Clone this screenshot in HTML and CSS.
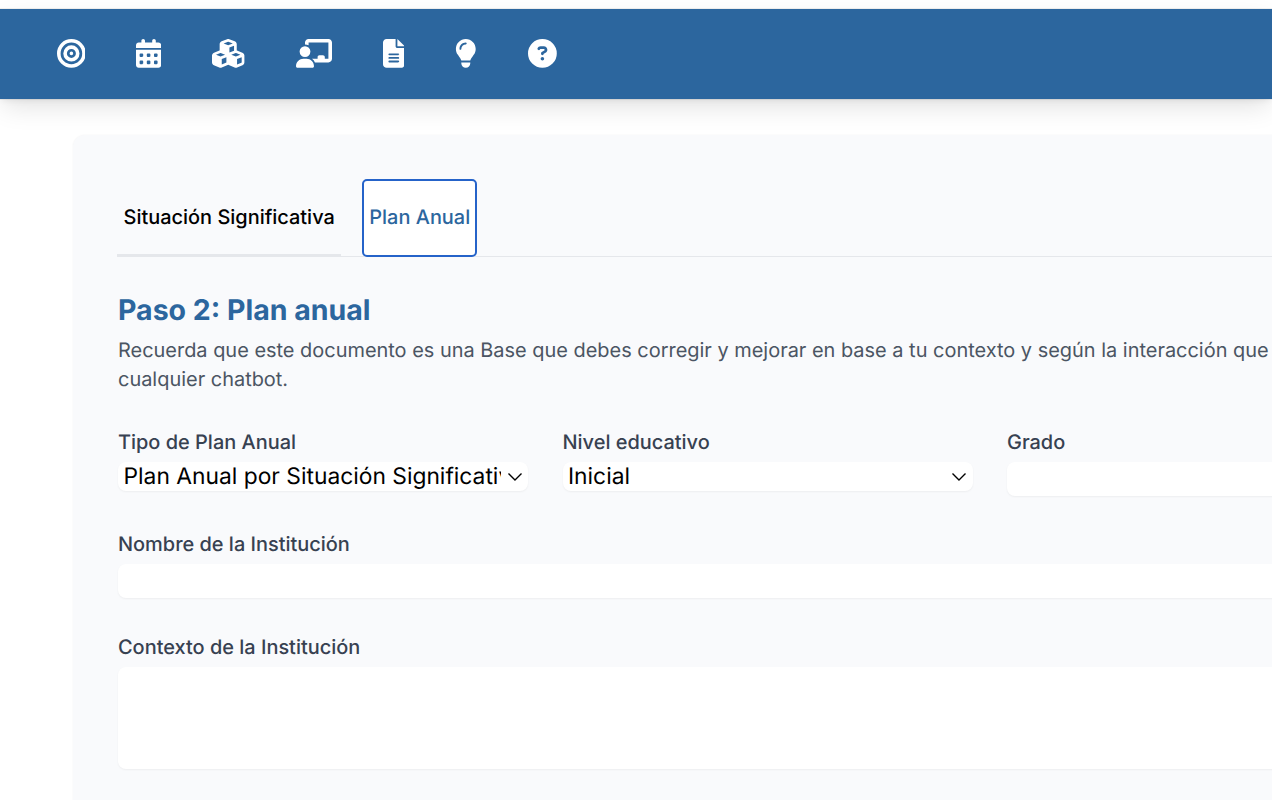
FILE: index.html
```html
<!DOCTYPE html>
<html lang="es">
<head>
<meta charset="utf-8">
<title>Plan Anual</title>
<link rel="stylesheet" href="styles.css">
</head>
<body>
<header class="topbar">
  <nav class="topnav">
    <a class="navitem"><svg class="ic ic-bullseye" viewBox="0 0 512 512"><path d="M448 256A192 192 0 1 0 64 256a192 192 0 1 0 384 0zM0 256a256 256 0 1 1 512 0A256 256 0 1 1 0 256zm256 80a80 80 0 1 0 0-160 80 80 0 1 0 0 160zm0-224a144 144 0 1 1 0 288 144 144 0 1 1 0-288zM224 256a32 32 0 1 1 64 0 32 32 0 1 1 -64 0z"/></svg></a>
    <a class="navitem"><svg class="ic ic-cal" viewBox="0 0 448 512"><path d="M128 0c17.7 0 32 14.3 32 32V64H288V32c0-17.7 14.3-32 32-32s32 14.3 32 32V64h48c26.5 0 48 21.5 48 48v48H0V112C0 85.5 21.5 64 48 64H96V32c0-17.7 14.3-32 32-32zM0 192H448V464c0 26.5-21.5 48-48 48H48c-26.5 0-48-21.5-48-48V192zm64 80v32c0 8.8 7.2 16 16 16h32c8.8 0 16-7.2 16-16V272c0-8.8-7.2-16-16-16H80c-8.8 0-16 7.2-16 16zm128 0v32c0 8.8 7.2 16 16 16h32c8.8 0 16-7.2 16-16V272c0-8.8-7.2-16-16-16H208c-8.8 0-16 7.2-16 16zm144-16c-8.8 0-16 7.2-16 16v32c0 8.8 7.2 16 16 16h32c8.8 0 16-7.2 16-16V272c0-8.8-7.2-16-16-16H336zM64 400v32c0 8.8 7.2 16 16 16h32c8.8 0 16-7.2 16-16V400c0-8.8-7.2-16-16-16H80c-8.8 0-16 7.2-16 16zm144-16c-8.8 0-16 7.2-16 16v32c0 8.8 7.2 16 16 16h32c8.8 0 16-7.2 16-16V400c0-8.8-7.2-16-16-16H208zm112 16v32c0 8.8 7.2 16 16 16h32c8.8 0 16-7.2 16-16V400c0-8.8-7.2-16-16-16H336c-8.8 0-16 7.2-16 16z"/></svg></a>
    <a class="navitem"><svg class="ic ic-cubes" viewBox="0 0 576 512"><path d="M290.8 48.6l78.4 29.7L288 109.5 206.8 78.3l78.4-29.7c1.8-.7 3.8-.7 5.7 0zM136 92.5V204.7c-1.3 .4-2.6 .8-3.9 1.3l-96 36.4C14.4 250.6 0 271.5 0 294.7V413.9c0 22.2 13.1 42.3 33.5 51.3l96 42.2c14.4 6.3 30.7 6.3 45.1 0L288 457.5l113.5 49.9c14.4 6.3 30.7 6.3 45.1 0l96-42.2c20.3-8.9 33.5-29.1 33.5-51.3V294.7c0-23.3-14.4-44.1-36.1-52.4l-96-36.4c-1.3-.5-2.6-.9-3.9-1.3V92.5c0-23.3-14.4-44.1-36.1-52.4l-96-36.4c-12.8-4.8-26.9-4.8-39.7 0l-96 36.4C150.4 48.4 136 69.3 136 92.5zM392 210.6l-82.4 31.2V152.6L392 121v89.6zM154.8 250.9l78.4 29.7L152 311.7 70.8 280.6l78.4-29.7c1.8-.7 3.8-.7 5.7 0zm18.8 204.4V354.8L256 323.2v95.9l-82.4 36.2zM421.2 250.9c1.8-.7 3.8-.7 5.7 0l78.4 29.7L424 311.7l-81.2-31.1 78.4-29.7zM523.2 421.2l-77.6 34.1V354.8L528 323.2v90.7c0 3.2-1.9 6.1-4.8 7.3z"/></svg></a>
    <a class="navitem"><svg class="ic ic-teacher" viewBox="0 0 640 512"><path d="M160 64c0-35.3 28.7-64 64-64H576c35.3 0 64 28.7 64 64V352c0 35.3-28.7 64-64 64H336.8c-11.8-25.5-29.9-47.5-52.4-64H384V320c0-17.7 14.3-32 32-32h64c17.7 0 32 14.3 32 32v32h64V64L224 64v49.1C205.2 102.2 183.3 96 160 96V64zm0 64a96 96 0 1 1 0 192 96 96 0 1 1 0-192zM133.3 352h53.3C260.3 352 320 411.7 320 485.3c0 14.7-11.9 26.7-26.7 26.7H26.7C11.9 512 0 500.1 0 485.3C0 411.7 59.7 352 133.3 352z"/></svg></a>
    <a class="navitem"><svg class="ic ic-file" viewBox="0 0 384 512"><path d="M64 0C28.7 0 0 28.7 0 64V448c0 35.3 28.7 64 64 64H320c35.3 0 64-28.7 64-64V160H256c-17.7 0-32-14.3-32-32V0H64zM256 0V128H384L256 0zM112 256H272c8.8 0 16 7.2 16 16s-7.2 16-16 16H112c-8.8 0-16-7.2-16-16s7.2-16 16-16zm0 64H272c8.8 0 16 7.2 16 16s-7.2 16-16 16H112c-8.8 0-16-7.2-16-16s7.2-16 16-16zm0 64H272c8.8 0 16 7.2 16 16s-7.2 16-16 16H112c-8.8 0-16-7.2-16-16s7.2-16 16-16z"/></svg></a>
    <a class="navitem"><svg class="ic ic-bulb" viewBox="0 0 384 512"><path d="M272 384c9.6-31.9 29.5-59.1 49.2-86.2l0 0c5.2-7.1 10.4-14.2 15.4-21.4c19.8-28.5 31.4-63 31.4-100.3C368 78.8 289.2 0 192 0S16 78.8 16 176c0 37.3 11.6 71.9 31.4 100.3c5 7.2 10.2 14.3 15.4 21.4l0 0c19.8 27.1 39.7 54.4 49.2 86.2H272zM192 512c44.2 0 80-35.8 80-80V416H112v16c0 44.2 35.8 80 80 80zM112 176c0 8.8-7.2 16-16 16s-16-7.2-16-16c0-61.9 50.1-112 112-112c8.8 0 16 7.2 16 16s-7.2 16-16 16c-44.2 0-80 35.8-80 80z"/></svg></a>
    <a class="navitem"><svg class="ic ic-help" viewBox="0 0 512 512"><path d="M256 512A256 256 0 1 0 256 0a256 256 0 1 0 0 512zM169.8 165.3c7.9-22.3 29.1-37.3 52.8-37.3h58.3c34.9 0 63.1 28.3 63.1 63.1c0 22.6-12.1 43.5-31.7 54.8L280 264.4c-.2 13-10.9 23.6-24 23.6c-13.3 0-24-10.7-24-24V250.5c0-8.6 4.6-16.5 12.1-20.8l44.3-25.4c4.7-2.7 7.6-7.7 7.6-13.1c0-8.4-6.8-15.1-15.1-15.1H222.6c-3.4 0-6.4 2.1-7.5 5.3l-.4 1.2c-4.4 12.5-18.2 19-30.6 14.6s-19-18.2-14.6-30.6l.4-1.2zM224 352a32 32 0 1 1 64 0 32 32 0 1 1 -64 0z"/></svg></a>
  </nav>
</header>
<main class="card">
  <div class="tabs">
    <button class="tab">Situación Significativa</button>
    <button class="tab tab-active">Plan Anual</button>
  </div>
  <h2 class="title">Paso 2: Plan anual</h2>
  <p class="lead">Recuerda que este documento es una Base que debes corregir y mejorar en base a tu contexto y según la interacción que tengas con cualquier chatbot.</p>
  <div class="row3">
    <div class="field">
      <label class="label">Tipo de Plan Anual</label>
      <div class="select"><span class="select-text">Plan Anual por Situación Significativa</span><svg class="chev" viewBox="0 0 16 10"><path d="M1.5 1.5 8 8l6.5-6.5"/></svg></div>
    </div>
    <div class="field">
      <label class="label">Nivel educativo</label>
      <div class="select"><span class="select-text">Inicial</span><svg class="chev" viewBox="0 0 16 10"><path d="M1.5 1.5 8 8l6.5-6.5"/></svg></div>
    </div>
    <div class="field">
      <label class="label">Grado</label>
      <div class="input"></div>
    </div>
  </div>
  <div class="field field-wide">
    <label class="label">Nombre de la Institución</label>
    <div class="input"></div>
  </div>
  <div class="field field-wide field-context">
    <label class="label">Contexto de la Institución</label>
    <div class="input textarea"></div>
  </div>
</main>
</body>
</html>
```
FILE: styles.css
```css
* { box-sizing: border-box; }
html, body { margin: 0; padding: 0; height: 800px; overflow: hidden; background: #fff; }
body { font-family: Inter, "Liberation Sans", sans-serif; padding-top: 9px; width: 1272px; text-rendering: geometricPrecision; }

.topbar {
  height: 90px;
  background: #2c669e;
  box-shadow: 0 0 1px rgba(0,0,0,.35), 0 10px 25px -3px rgba(0,0,0,.12), 0 4px 6px -2px rgba(0,0,0,.06);
  display: flex;
  align-items: center;
  padding: 0 0 1px 56.5px;
  position: relative;
}
.topnav { display: flex; align-items: center; gap: 51px; }
.navitem { display: flex; }
.ic { height: 28.8px; fill: #fff; display: block; }
.ic-bullseye { width: 28.8px; }
.ic-cal { width: 25.2px; }
.ic-cubes { width: 32.4px; }
.ic-teacher { width: 36px; }
.ic-file { width: 21.6px; }
.ic-bulb { width: 21.6px; }
.ic-help { width: 28.8px; }

.card {
  margin: 36px 0 0 73px;
  width: 1390px;
  min-height: 800px;
  background: #f9fafc;
  border-radius: 12px;
  padding: 44px 45px 0;
  box-shadow: 0 0 2px rgba(0,0,0,.06);
}
.tabs { display: flex; gap: 21px; height: 78px; border-bottom: 1px solid #e5e7eb; margin-left: -1px; }
.tab {
  font: 500 19.95px/24px Inter, sans-serif;
  text-rendering: geometricPrecision;
  background: none;
  color: #000;
  border: 0;
  border-bottom: 2px solid #e5e7eb;
  padding: 0 6.5px;
  height: 77px;
}
.tab-active {
  height: 78px;
  background: #fff;
  color: #2c669e;
  border: 2px solid #2563c9;
  border-radius: 5px;
  padding: 0 5px 2px;
}
.title { font: 700 28.5px/36px Inter, sans-serif; color: #2c669e; margin: 35px 0 0; }
.lead { font: 400 19.95px/29px Inter, sans-serif; color: #4b5563; margin: 8px 0 0; width: 1300px; }
.row3 { display: grid; grid-template-columns: repeat(3, 410px); column-gap: 34.5px; margin-top: 35px; }
.field { display: flex; flex-direction: column; }
.field-wide { width: 1300px; margin-top: 35px; }
.field-context { margin-top: 36px; }
.label { font: 500 19.95px/26px Inter, sans-serif; color: #374151; height: 33px; }
.select {
  height: 29px;
  background: #fff;
  border-radius: 8px;
  box-shadow: 0 1px 2px rgba(0,0,0,.05);
  display: flex;
  align-items: center;
  padding: 0 5.5px;
  color: #000;
  font: 400 22.8px/29px Inter, sans-serif;
}
.select-text { flex: 1; min-width: 0; overflow: hidden; white-space: nowrap; }
.chev { width: 16px; height: 10px; margin: 0 0 0 6px; fill: none; stroke: #000; stroke-width: 1.4; flex: none; }
.input {
  height: 34px;
  background: #fff;
  border-radius: 8px;
  box-shadow: 0 1px 2px rgba(0,0,0,.05);
}
.textarea { height: 102px; }
```
